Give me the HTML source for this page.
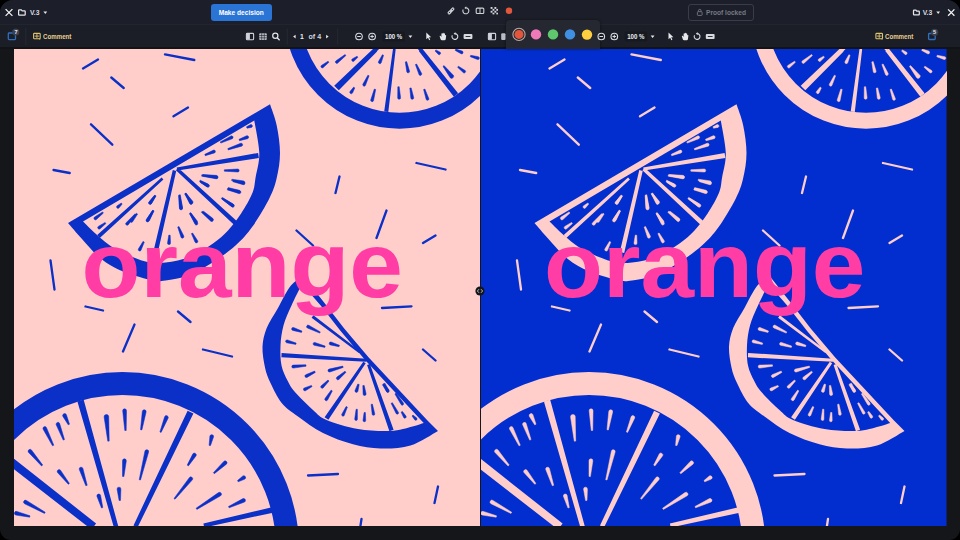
<!DOCTYPE html>
<html><head><meta charset="utf-8"><title>Proof compare</title>
<style>
html,body{margin:0;padding:0;background:#000;}
body{width:960px;height:540px;overflow:hidden;font-family:"Liberation Sans",sans-serif;}
#app{position:relative;width:960px;height:540px;background:#14161a;border-radius:13px 13px 11px 11px;overflow:hidden;}
#top{position:absolute;left:0;top:0;width:960px;height:24px;background:#1c1f29;}
#bar{position:absolute;left:0;top:24px;width:960px;height:24px;background:#1b1e27;border-top:1px solid #22252f;box-sizing:border-box;}
#chrome{position:absolute;left:0;top:0;}
#chrome text{font-family:"Liberation Sans",sans-serif;font-weight:bold;font-size:6.8px;}
.btn{position:absolute;box-sizing:border-box;border-radius:3px;font-weight:bold;font-size:6.6px;line-height:18.3px;overflow:hidden;white-space:nowrap;}
</style></head><body>
<div id="app">
<div id="top"></div>
<div id="bar"></div>
<svg style="position:absolute;left:13.5px;top:48.5px" width="466" height="477" viewBox="13.5 48.5 466 477">
<rect x="13.5" y="48" width="466" height="478" fill="#ffcecb"/>
<g transform="translate(0,0)">
<path d="M82.5 68.0L97.5 59.0M164.5 53.8L193.8 59.5M110.8 77.0L123.2 87.5M173.0 115.8L187.5 107.0M90.5 123.8L111.8 144.2M53.0 169.5L69.2 172.5M416.0 162.5L445.0 169.0M339.0 176.0L335.0 192.5M386.0 210.0L376.0 237.5M296.0 230.0L312.5 245.0M435.0 235.0L422.5 242.5M50.0 260.0L54.0 289.0M381.5 307.5L411.0 305.8M85.0 306.0L102.5 310.0M134.0 324.0L122.5 351.0M177.5 311.0L190.0 321.5M202.5 349.0L231.5 356.0M422.5 349.0L435.0 360.0M307.5 475.0L337.5 473.5M437.5 486.0L434.0 502.5M361.0 518.5L360.0 525.0" stroke="#0b30c8" stroke-width="2.3" stroke-linecap="round" fill="none"/>
<circle cx="399" cy="13" r="107.2" fill="none" stroke="#0b30c8" stroke-width="16"/>
<path d="M373.4 47.6L333.7 85.2L338.3 89.8L376.6 50.9ZM392.4 49.1L383.7 111.0L387.8 111.5L395.1 49.4ZM418.3 50.5L453.4 96.2L457.6 92.8L421.7 48.0ZM395.4 26.9L373.6 47.8L376.4 50.7L397.6 29.1ZM395.5 27.9L392.5 49.1L395.0 49.4L397.5 28.1ZM399.3 28.7L418.9 50.3L421.1 48.2L400.7 27.3Z" fill="#0b30c8"/>
<path d="M322.5 67.3L328.4 61.8L327.6 60.7L320.8 65.0A1.45 1.45 0 0 0 322.5 67.3ZM337.0 62.7L345.4 55.0L344.6 54.0L335.2 60.5A1.45 1.45 0 0 0 337.0 62.7ZM353.3 60.8L357.4 56.8L356.6 55.7L351.6 58.5A1.45 1.45 0 0 0 353.3 60.8ZM380.7 62.3L383.1 54.8L381.9 54.2L378.0 61.1A1.45 1.45 0 0 0 380.7 62.3ZM364.9 85.0L368.6 75.3L367.4 74.7L362.3 83.8A1.45 1.45 0 0 0 364.9 85.0ZM352.0 92.5L354.3 87.4L353.2 86.6L349.5 91.0A1.45 1.45 0 0 0 352.0 92.5ZM373.0 100.2L375.2 88.9L373.8 88.6L370.2 99.5A1.45 1.45 0 0 0 373.0 100.2ZM409.1 70.8L406.2 61.1L404.8 61.4L406.3 71.4A1.45 1.45 0 0 0 409.1 70.8ZM421.2 73.1L416.1 63.5L414.9 64.0L418.6 74.3A1.45 1.45 0 0 0 421.2 73.1ZM400.1 97.2L398.7 86.2L397.3 86.3L397.2 97.4A1.45 1.45 0 0 0 400.1 97.2ZM413.2 97.1L410.7 87.4L409.3 87.6L410.3 97.6A1.45 1.45 0 0 0 413.2 97.1ZM428.4 98.2L424.4 88.5L423.1 89.0L425.7 99.1A1.45 1.45 0 0 0 428.4 98.2ZM464.7 70.0L457.9 65.7L457.1 66.8L463.0 72.3A1.45 1.45 0 0 0 464.7 70.0ZM439.7 51.7L435.4 49.4L434.6 50.6L438.0 54.0A1.45 1.45 0 0 0 439.7 51.7ZM461.7 50.6L455.3 48.6L454.7 49.9L460.6 53.3A1.45 1.45 0 0 0 461.7 50.6ZM477.8 56.2L470.2 54.8L469.8 56.2L477.0 59.0A1.45 1.45 0 0 0 477.8 56.2Z" fill="#0b30c8" stroke="#0b30c8" stroke-width="0.5" stroke-linejoin="round"/>
<path d="M452.8 74.7L443.5 65.1L442.5 65.9L449.7 77.2A2.00 2.00 0 0 0 452.8 74.7Z" fill="#0b30c8" stroke="#0b30c8" stroke-width="0.5" stroke-linejoin="round"/>
<circle cx="122" cy="548" r="165" fill="none" stroke="#0b30c8" stroke-width="23"/>
<path d="M76.9 400.9L113.3 526.6L117.7 525.4L83.1 399.1ZM187.1 410.3L133.0 525.0L137.0 527.0L192.9 413.1ZM7.4 464.1L91.0 529.0L95.6 523.0L12.6 457.5ZM271.4 506.8L202.9 523.0L203.7 527.0L272.6 512.2Z" fill="#0b30c8"/>
<path d="M62.4 415.9L67.7 424.3L69.0 423.7L65.9 414.2A1.90 1.90 0 0 0 62.4 415.9ZM42.5 428.5L52.0 445.3L53.3 444.7L45.9 426.9A1.90 1.90 0 0 0 42.5 428.5ZM55.6 424.1L62.7 439.6L64.0 439.1L59.1 422.8A1.90 1.90 0 0 0 55.6 424.1ZM28.1 452.0L41.1 465.5L42.2 464.5L31.0 449.5A1.90 1.90 0 0 0 28.1 452.0ZM78.8 469.1L85.3 485.2L86.7 484.8L82.4 467.9A1.90 1.90 0 0 0 78.8 469.1ZM57.0 472.0L67.8 483.8L68.9 482.9L60.0 469.7A1.90 1.90 0 0 0 57.0 472.0ZM96.4 495.7L101.0 507.5L102.3 507.1L100.0 494.6A1.90 1.90 0 0 0 96.4 495.7ZM116.6 488.7L118.6 500.1L120.0 499.9L120.4 488.4A1.90 1.90 0 0 0 116.6 488.7ZM122.2 410.3L124.3 430.0L125.7 430.0L126.0 410.1A1.90 1.90 0 0 0 122.2 410.3ZM141.8 410.9L140.0 429.2L141.4 429.4L145.6 411.5A1.90 1.90 0 0 0 141.8 410.9ZM164.2 416.1L159.4 431.4L160.6 431.9L167.7 417.5A1.90 1.90 0 0 0 164.2 416.1ZM144.4 450.7L138.7 479.2L140.0 479.5L148.1 451.6A1.90 1.90 0 0 0 144.4 450.7ZM122.0 460.1L122.0 475.9L123.4 476.1L125.8 460.4A1.90 1.90 0 0 0 122.0 460.1ZM209.4 435.5L208.6 444.9L210.0 445.1L213.1 436.3A1.90 1.90 0 0 0 209.4 435.5ZM192.4 453.3L186.7 464.6L187.9 465.4L195.6 455.3A1.90 1.90 0 0 0 192.4 453.3ZM223.3 460.9L212.9 472.2L213.8 473.2L225.9 463.7A1.90 1.90 0 0 0 223.3 460.9ZM189.0 476.9L173.5 497.9L174.5 498.8L191.9 479.3A1.90 1.90 0 0 0 189.0 476.9ZM242.4 475.4L237.0 480.1L237.7 481.3L244.4 478.6A1.90 1.90 0 0 0 242.4 475.4ZM218.0 492.1L195.6 507.7L196.4 508.9L220.1 495.3A1.90 1.90 0 0 0 218.0 492.1ZM242.5 498.1L228.0 506.0L228.6 507.3L244.1 501.5A1.90 1.90 0 0 0 242.5 498.1ZM24.1 503.3L44.0 512.9L44.7 511.7L25.9 499.9A1.90 1.90 0 0 0 24.1 503.3ZM15.4 514.6L29.2 516.7L29.5 515.3L16.3 510.9A1.90 1.90 0 0 0 15.4 514.6Z" fill="#0b30c8" stroke="#0b30c8" stroke-width="0.5" stroke-linejoin="round"/>
<path d="M103.6 416.5L107.3 440.7L108.7 440.6L108.2 416.1A2.30 2.30 0 0 0 103.6 416.5Z" fill="#0b30c8" stroke="#0b30c8" stroke-width="0.5" stroke-linejoin="round"/>
<path d="M269.5 103.8C270.6 107.3 274.6 116.9 276.2 125.0C277.9 133.1 279.5 143.8 279.5 152.5C279.5 161.2 278.0 169.9 276.2 177.5C274.5 185.1 272.8 189.9 268.8 198.0C264.7 206.1 257.6 218.2 252.0 226.0C246.4 233.8 241.7 239.0 235.0 245.0C228.3 251.0 219.9 257.0 212.0 262.0C204.1 267.0 195.3 272.0 187.5 275.0C179.7 278.0 171.2 279.2 165.0 280.0C158.8 280.8 157.7 281.2 150.0 279.5C142.3 277.8 127.6 273.3 119.0 269.5C110.4 265.7 104.8 261.7 98.5 256.5C92.2 251.3 86.7 244.2 81.5 238.5C76.3 232.8 69.8 225.2 67.5 222.5Z" fill="#0b30c8"/>
<path d="M253.8 120.0C254.6 125.4 258.5 142.9 258.8 152.5C259.0 162.1 256.1 170.8 255.0 177.5C253.9 184.2 254.3 186.6 251.9 192.5C249.5 198.4 244.7 206.8 240.6 213.0C236.5 219.2 232.2 225.0 227.5 230.0C222.8 235.0 218.8 238.7 212.5 243.0C206.2 247.3 197.9 252.8 190.0 256.0C182.1 259.2 172.5 261.2 165.0 262.0C157.5 262.8 152.9 263.0 145.0 261.0C137.1 259.0 125.0 253.9 117.5 250.0C110.0 246.1 105.8 242.3 100.0 237.5C94.2 232.7 85.4 223.8 82.5 221.0Z" fill="#ffcecb"/>
<path d="M176.8 170.1L258.4 157.5L257.6 152.5L176.2 166.9ZM175.4 169.7L233.5 224.2L236.5 220.8L177.6 167.3ZM172.3 169.6L152.8 251.5L157.2 252.5L175.7 170.4ZM161.1 177.0L96.7 234.6L99.3 237.4L162.9 179.0Z" fill="#0b30c8"/>
<path d="M250.1 124.1L246.0 126.3L246.5 127.7L251.1 126.9A1.50 1.50 0 0 0 250.1 124.1ZM246.1 135.3L238.5 138.8L239.0 140.2L247.1 138.2A1.50 1.50 0 0 0 246.1 135.3ZM240.1 142.8L227.3 148.1L227.7 149.4L241.1 145.7A1.50 1.50 0 0 0 240.1 142.8ZM230.5 135.5L219.7 141.4L220.3 142.6L231.8 138.2A1.50 1.50 0 0 0 230.5 135.5ZM213.1 149.6L204.3 153.8L204.7 155.2L214.1 152.4A1.50 1.50 0 0 0 213.1 149.6ZM237.2 168.5L223.8 169.3L223.8 170.7L237.2 171.5A1.50 1.50 0 0 0 237.2 168.5ZM216.2 175.3L201.3 174.3L201.2 175.7L215.8 178.3A1.50 1.50 0 0 0 216.2 175.3ZM243.3 181.2L232.6 179.8L232.4 181.2L242.7 184.2A1.50 1.50 0 0 0 243.3 181.2ZM207.4 183.5L200.3 180.6L199.7 181.9L206.0 186.1A1.50 1.50 0 0 0 207.4 183.5ZM239.4 190.2L227.2 188.1L226.8 189.4L238.7 193.1A1.50 1.50 0 0 0 239.4 190.2ZM233.4 204.2L221.7 196.9L220.8 198.1L231.7 206.6A1.50 1.50 0 0 0 233.4 204.2ZM182.0 207.0L179.4 194.9L178.1 195.1L179.0 207.5A1.50 1.50 0 0 0 182.0 207.0ZM191.8 201.7L185.6 192.6L184.4 193.4L189.2 203.2A1.50 1.50 0 0 0 191.8 201.7ZM196.7 220.4L190.1 212.1L188.9 212.9L194.2 222.1A1.50 1.50 0 0 0 196.7 220.4ZM212.4 217.9L203.0 210.7L202.0 211.8L210.4 220.1A1.50 1.50 0 0 0 212.4 217.9ZM150.8 203.4L155.6 195.4L154.4 194.6L148.4 201.7A1.50 1.50 0 0 0 150.8 203.4ZM148.3 220.7L153.6 210.4L152.4 209.6L145.7 219.2A1.50 1.50 0 0 0 148.3 220.7ZM127.6 224.4L135.5 214.2L134.5 213.3L125.4 222.4A1.50 1.50 0 0 0 127.6 224.4ZM118.4 207.6L121.7 203.5L120.8 202.5L116.4 205.4A1.50 1.50 0 0 0 118.4 207.6ZM95.9 219.0L102.9 212.6L102.1 211.4L94.0 216.6A1.50 1.50 0 0 0 95.9 219.0ZM99.6 228.3L105.4 223.1L104.6 221.9L97.8 225.9A1.50 1.50 0 0 0 99.6 228.3Z" fill="#0b30c8" stroke="#0b30c8" stroke-width="0.5" stroke-linejoin="round"/>
<path d="M182.0 207.7L179.8 194.3L178.4 194.4L179.0 208.0A1.50 1.50 0 0 0 182.0 207.7ZM192.2 200.7L185.3 192.5L184.2 193.3L189.8 202.5A1.50 1.50 0 0 0 192.2 200.7ZM197.1 222.3L190.6 212.8L189.4 213.5L194.5 223.8A1.50 1.50 0 0 0 197.1 222.3ZM212.3 218.5L201.7 210.7L200.8 211.8L210.4 220.8A1.50 1.50 0 0 0 212.3 218.5ZM183.3 235.5L178.5 226.0L177.2 226.5L180.5 236.7A1.50 1.50 0 0 0 183.3 235.5ZM197.2 240.2L192.1 232.5L190.9 233.1L194.5 241.6A1.50 1.50 0 0 0 197.2 240.2ZM170.0 242.7L169.7 234.7L168.3 234.6L167.0 242.5A1.50 1.50 0 0 0 170.0 242.7ZM148.9 220.0L153.1 210.6L151.9 210.0L146.3 218.6A1.50 1.50 0 0 0 148.9 220.0ZM150.8 203.3L155.0 195.7L153.8 194.9L148.3 201.7A1.50 1.50 0 0 0 150.8 203.3ZM140.4 250.0L143.8 241.6L142.5 240.9L137.8 248.6A1.50 1.50 0 0 0 140.4 250.0ZM132.1 221.3L137.1 213.6L136.0 212.7L129.7 219.5A1.50 1.50 0 0 0 132.1 221.3ZM215.9 174.9L202.3 174.0L202.1 175.4L215.5 177.9A1.50 1.50 0 0 0 215.9 174.9ZM208.2 183.9L199.7 179.7L199.0 180.9L206.7 186.5A1.50 1.50 0 0 0 208.2 183.9ZM243.2 180.4L231.4 178.7L231.1 180.1L242.6 183.3A1.50 1.50 0 0 0 243.2 180.4ZM238.7 189.7L227.7 187.1L227.3 188.5L237.8 192.6A1.50 1.50 0 0 0 238.7 189.7ZM232.7 203.5L222.3 197.5L221.5 198.7L231.0 206.0A1.50 1.50 0 0 0 232.7 203.5Z" fill="#0b30c8" stroke="#0b30c8" stroke-width="0.5" stroke-linejoin="round"/>
<path d="M303.0 276.0C300.8 277.6 294.2 280.2 290.0 285.5C285.8 290.8 281.5 300.5 277.5 307.5C273.5 314.5 268.8 321.1 266.2 327.5C263.7 333.9 262.3 339.4 262.0 346.0C261.7 352.6 263.2 360.9 264.5 367.0C265.8 373.1 267.2 376.6 270.0 382.5C272.8 388.4 276.7 396.9 281.2 402.5C285.8 408.1 290.6 411.0 297.5 416.0C304.4 421.0 313.3 427.9 322.5 432.5C331.7 437.1 342.9 441.2 352.5 443.8C362.1 446.3 370.4 447.8 380.0 448.0C389.6 448.2 400.4 447.9 410.0 445.0C419.6 442.1 432.9 432.9 437.5 430.5L426.5 419.5L368.0 356.7L343.5 327.8L324.0 302.6Z" fill="#0b30c8"/>
<path d="M301.5 283.5C299.8 287.1 294.1 298.1 291.0 305.0C287.9 311.9 284.8 318.3 283.0 325.0C281.2 331.7 280.3 338.3 280.0 345.0C279.7 351.7 279.8 359.2 281.0 365.0C282.2 370.8 284.8 375.7 287.0 380.0C289.2 384.3 289.8 386.1 294.0 391.0C298.2 395.9 307.2 404.8 312.5 409.5C317.8 414.2 318.5 416.3 326.0 419.5C333.5 422.7 346.8 426.7 357.5 428.5C368.2 430.3 380.9 430.9 390.0 430.5C399.1 430.1 406.5 427.3 412.0 426.0C417.5 424.7 421.3 423.2 423.2 422.6L364.6 359.5L340.1 330.6L320.6 305.4Z" fill="#ffcecb"/>
<path d="M366.1 358.3L281.1 352.4L280.9 356.8L365.9 361.3ZM362.8 361.2L324.1 416.7L327.9 419.3L365.2 362.8ZM366.6 364.5L388.9 430.7L393.1 429.3L369.4 363.5ZM359.7 350.8L312.9 314.8L311.1 317.2L358.3 352.6Z" fill="#0b30c8"/>
<path d="M292.2 329.9L301.0 331.9L301.5 330.6L293.1 327.0A1.50 1.50 0 0 0 292.2 329.9ZM306.9 327.5L319.2 332.6L319.8 331.4L308.3 324.8A1.50 1.50 0 0 0 306.9 327.5ZM286.1 342.3L295.3 343.9L295.7 342.6L286.8 339.4A1.50 1.50 0 0 0 286.1 342.3ZM313.6 344.8L324.3 346.9L324.7 345.6L314.3 341.9A1.50 1.50 0 0 0 313.6 344.8ZM329.8 344.4L338.5 346.2L339.0 344.8L330.6 341.5A1.50 1.50 0 0 0 329.8 344.4ZM292.9 367.6L305.6 365.7L305.4 364.3L292.6 364.6A1.50 1.50 0 0 0 292.9 367.6ZM306.5 376.9L314.8 371.9L314.2 370.6L305.2 374.2A1.50 1.50 0 0 0 306.5 376.9ZM329.4 371.5L342.7 366.9L342.3 365.6L328.5 368.6A1.50 1.50 0 0 0 329.4 371.5ZM305.0 390.2L311.6 386.1L310.9 384.9L303.7 387.5A1.50 1.50 0 0 0 305.0 390.2ZM322.6 387.5L328.5 380.5L327.5 379.5L320.5 385.4A1.50 1.50 0 0 0 322.6 387.5ZM338.4 378.9L345.5 371.8L344.5 370.7L336.4 376.6A1.50 1.50 0 0 0 338.4 378.9ZM327.1 399.5L331.8 390.4L330.7 389.6L324.5 397.9A1.50 1.50 0 0 0 327.1 399.5ZM357.4 390.8L358.7 384.0L357.3 383.5L354.5 389.9A1.50 1.50 0 0 0 357.4 390.8ZM365.6 393.3L363.7 384.9L362.3 385.1L362.6 393.7A1.50 1.50 0 0 0 365.6 393.3ZM388.3 389.2L383.1 383.3L381.9 384.2L385.9 390.9A1.50 1.50 0 0 0 388.3 389.2Z" fill="#0b30c8" stroke="#0b30c8" stroke-width="0.5" stroke-linejoin="round"/>
<path d="M343.8 414.8L346.9 406.5L345.6 406.0L341.3 413.7A1.35 1.35 0 0 0 343.8 414.8ZM356.9 418.7L356.9 408.8L355.6 408.7L354.2 418.6A1.35 1.35 0 0 0 356.9 418.7ZM365.2 420.0L364.9 412.0L363.6 412.0L362.5 419.8A1.35 1.35 0 0 0 365.2 420.0ZM374.3 413.4L371.9 403.6L370.6 403.9L371.7 413.9A1.35 1.35 0 0 0 374.3 413.4ZM398.0 411.9L391.9 402.2L390.6 402.8L395.7 413.2A1.35 1.35 0 0 0 398.0 411.9ZM405.5 415.6L401.9 410.9L400.6 411.6L403.1 417.0A1.35 1.35 0 0 0 405.5 415.6ZM416.3 417.6L412.5 414.5L411.5 415.5L414.3 419.4A1.35 1.35 0 0 0 416.3 417.6ZM388.6 390.2L384.4 382.7L383.1 383.3L386.2 391.4A1.35 1.35 0 0 0 388.6 390.2ZM402.9 402.6L395.6 392.6L394.4 393.4L400.6 404.1A1.35 1.35 0 0 0 402.9 402.6Z" fill="#0b30c8" stroke="#0b30c8" stroke-width="0.5" stroke-linejoin="round"/>
</g>
<text x="81" y="296" font-family="Liberation Sans, sans-serif" font-weight="bold" font-size="93.5" textLength="321.5" lengthAdjust="spacingAndGlyphs" fill="#ff3da4">orange</text>
</svg>
<svg style="position:absolute;left:481px;top:48.5px" width="465.5" height="477" viewBox="481 48.5 465.5 477">
<rect x="481" y="48" width="465.5" height="478" fill="#032ecf"/>
<g transform="translate(467,0)">
<path d="M82.5 68.0L97.5 59.0M164.5 53.8L193.8 59.5M110.8 77.0L123.2 87.5M173.0 115.8L187.5 107.0M90.5 123.8L111.8 144.2M53.0 169.5L69.2 172.5M416.0 162.5L445.0 169.0M339.0 176.0L335.0 192.5M386.0 210.0L376.0 237.5M296.0 230.0L312.5 245.0M435.0 235.0L422.5 242.5M50.0 260.0L54.0 289.0M381.5 307.5L411.0 305.8M85.0 306.0L102.5 310.0M134.0 324.0L122.5 351.0M177.5 311.0L190.0 321.5M202.5 349.0L231.5 356.0M422.5 349.0L435.0 360.0M307.5 475.0L337.5 473.5M437.5 486.0L434.0 502.5M361.0 518.5L360.0 525.0" stroke="#ffcecb" stroke-width="2.3" stroke-linecap="round" fill="none"/>
<circle cx="399" cy="13" r="107.2" fill="none" stroke="#ffcecb" stroke-width="16"/>
<path d="M373.4 47.6L333.7 85.2L338.3 89.8L376.6 50.9ZM392.4 49.1L383.7 111.0L387.8 111.5L395.1 49.4ZM418.3 50.5L453.4 96.2L457.6 92.8L421.7 48.0ZM395.4 26.9L373.6 47.8L376.4 50.7L397.6 29.1ZM395.5 27.9L392.5 49.1L395.0 49.4L397.5 28.1ZM399.3 28.7L418.9 50.3L421.1 48.2L400.7 27.3Z" fill="#ffcecb"/>
<path d="M322.5 67.3L328.4 61.8L327.6 60.7L320.8 65.0A1.45 1.45 0 0 0 322.5 67.3ZM337.0 62.7L345.4 55.0L344.6 54.0L335.2 60.5A1.45 1.45 0 0 0 337.0 62.7ZM353.3 60.8L357.4 56.8L356.6 55.7L351.6 58.5A1.45 1.45 0 0 0 353.3 60.8ZM380.7 62.3L383.1 54.8L381.9 54.2L378.0 61.1A1.45 1.45 0 0 0 380.7 62.3ZM364.9 85.0L368.6 75.3L367.4 74.7L362.3 83.8A1.45 1.45 0 0 0 364.9 85.0ZM352.0 92.5L354.3 87.4L353.2 86.6L349.5 91.0A1.45 1.45 0 0 0 352.0 92.5ZM373.0 100.2L375.2 88.9L373.8 88.6L370.2 99.5A1.45 1.45 0 0 0 373.0 100.2ZM409.1 70.8L406.2 61.1L404.8 61.4L406.3 71.4A1.45 1.45 0 0 0 409.1 70.8ZM421.2 73.1L416.1 63.5L414.9 64.0L418.6 74.3A1.45 1.45 0 0 0 421.2 73.1ZM400.1 97.2L398.7 86.2L397.3 86.3L397.2 97.4A1.45 1.45 0 0 0 400.1 97.2ZM413.2 97.1L410.7 87.4L409.3 87.6L410.3 97.6A1.45 1.45 0 0 0 413.2 97.1ZM428.4 98.2L424.4 88.5L423.1 89.0L425.7 99.1A1.45 1.45 0 0 0 428.4 98.2ZM464.7 70.0L457.9 65.7L457.1 66.8L463.0 72.3A1.45 1.45 0 0 0 464.7 70.0ZM439.7 51.7L435.4 49.4L434.6 50.6L438.0 54.0A1.45 1.45 0 0 0 439.7 51.7ZM461.7 50.6L455.3 48.6L454.7 49.9L460.6 53.3A1.45 1.45 0 0 0 461.7 50.6ZM477.8 56.2L470.2 54.8L469.8 56.2L477.0 59.0A1.45 1.45 0 0 0 477.8 56.2Z" fill="#ffcecb" stroke="#ffcecb" stroke-width="0.5" stroke-linejoin="round"/>
<path d="M452.8 74.7L443.5 65.1L442.5 65.9L449.7 77.2A2.00 2.00 0 0 0 452.8 74.7Z" fill="#ffcecb" stroke="#ffcecb" stroke-width="0.5" stroke-linejoin="round"/>
<circle cx="122" cy="548" r="165" fill="none" stroke="#ffcecb" stroke-width="23"/>
<path d="M76.9 400.9L113.3 526.6L117.7 525.4L83.1 399.1ZM187.1 410.3L133.0 525.0L137.0 527.0L192.9 413.1ZM7.4 464.1L91.0 529.0L95.6 523.0L12.6 457.5ZM271.4 506.8L202.9 523.0L203.7 527.0L272.6 512.2Z" fill="#ffcecb"/>
<path d="M62.4 415.9L67.7 424.3L69.0 423.7L65.9 414.2A1.90 1.90 0 0 0 62.4 415.9ZM42.5 428.5L52.0 445.3L53.3 444.7L45.9 426.9A1.90 1.90 0 0 0 42.5 428.5ZM55.6 424.1L62.7 439.6L64.0 439.1L59.1 422.8A1.90 1.90 0 0 0 55.6 424.1ZM28.1 452.0L41.1 465.5L42.2 464.5L31.0 449.5A1.90 1.90 0 0 0 28.1 452.0ZM78.8 469.1L85.3 485.2L86.7 484.8L82.4 467.9A1.90 1.90 0 0 0 78.8 469.1ZM57.0 472.0L67.8 483.8L68.9 482.9L60.0 469.7A1.90 1.90 0 0 0 57.0 472.0ZM96.4 495.7L101.0 507.5L102.3 507.1L100.0 494.6A1.90 1.90 0 0 0 96.4 495.7ZM116.6 488.7L118.6 500.1L120.0 499.9L120.4 488.4A1.90 1.90 0 0 0 116.6 488.7ZM122.2 410.3L124.3 430.0L125.7 430.0L126.0 410.1A1.90 1.90 0 0 0 122.2 410.3ZM141.8 410.9L140.0 429.2L141.4 429.4L145.6 411.5A1.90 1.90 0 0 0 141.8 410.9ZM164.2 416.1L159.4 431.4L160.6 431.9L167.7 417.5A1.90 1.90 0 0 0 164.2 416.1ZM144.4 450.7L138.7 479.2L140.0 479.5L148.1 451.6A1.90 1.90 0 0 0 144.4 450.7ZM122.0 460.1L122.0 475.9L123.4 476.1L125.8 460.4A1.90 1.90 0 0 0 122.0 460.1ZM209.4 435.5L208.6 444.9L210.0 445.1L213.1 436.3A1.90 1.90 0 0 0 209.4 435.5ZM192.4 453.3L186.7 464.6L187.9 465.4L195.6 455.3A1.90 1.90 0 0 0 192.4 453.3ZM223.3 460.9L212.9 472.2L213.8 473.2L225.9 463.7A1.90 1.90 0 0 0 223.3 460.9ZM189.0 476.9L173.5 497.9L174.5 498.8L191.9 479.3A1.90 1.90 0 0 0 189.0 476.9ZM242.4 475.4L237.0 480.1L237.7 481.3L244.4 478.6A1.90 1.90 0 0 0 242.4 475.4ZM218.0 492.1L195.6 507.7L196.4 508.9L220.1 495.3A1.90 1.90 0 0 0 218.0 492.1ZM242.5 498.1L228.0 506.0L228.6 507.3L244.1 501.5A1.90 1.90 0 0 0 242.5 498.1ZM24.1 503.3L44.0 512.9L44.7 511.7L25.9 499.9A1.90 1.90 0 0 0 24.1 503.3ZM15.4 514.6L29.2 516.7L29.5 515.3L16.3 510.9A1.90 1.90 0 0 0 15.4 514.6Z" fill="#ffcecb" stroke="#ffcecb" stroke-width="0.5" stroke-linejoin="round"/>
<path d="M103.6 416.5L107.3 440.7L108.7 440.6L108.2 416.1A2.30 2.30 0 0 0 103.6 416.5Z" fill="#ffcecb" stroke="#ffcecb" stroke-width="0.5" stroke-linejoin="round"/>
<path d="M269.5 103.8C270.6 107.3 274.6 116.9 276.2 125.0C277.9 133.1 279.5 143.8 279.5 152.5C279.5 161.2 278.0 169.9 276.2 177.5C274.5 185.1 272.8 189.9 268.8 198.0C264.7 206.1 257.6 218.2 252.0 226.0C246.4 233.8 241.7 239.0 235.0 245.0C228.3 251.0 219.9 257.0 212.0 262.0C204.1 267.0 195.3 272.0 187.5 275.0C179.7 278.0 171.2 279.2 165.0 280.0C158.8 280.8 157.7 281.2 150.0 279.5C142.3 277.8 127.6 273.3 119.0 269.5C110.4 265.7 104.8 261.7 98.5 256.5C92.2 251.3 86.7 244.2 81.5 238.5C76.3 232.8 69.8 225.2 67.5 222.5Z" fill="#ffcecb"/>
<path d="M253.8 120.0C254.6 125.4 258.5 142.9 258.8 152.5C259.0 162.1 256.1 170.8 255.0 177.5C253.9 184.2 254.3 186.6 251.9 192.5C249.5 198.4 244.7 206.8 240.6 213.0C236.5 219.2 232.2 225.0 227.5 230.0C222.8 235.0 218.8 238.7 212.5 243.0C206.2 247.3 197.9 252.8 190.0 256.0C182.1 259.2 172.5 261.2 165.0 262.0C157.5 262.8 152.9 263.0 145.0 261.0C137.1 259.0 125.0 253.9 117.5 250.0C110.0 246.1 105.8 242.3 100.0 237.5C94.2 232.7 85.4 223.8 82.5 221.0Z" fill="#032ecf"/>
<path d="M176.8 170.1L258.4 157.5L257.6 152.5L176.2 166.9ZM175.4 169.7L233.5 224.2L236.5 220.8L177.6 167.3ZM172.3 169.6L152.8 251.5L157.2 252.5L175.7 170.4ZM161.1 177.0L96.7 234.6L99.3 237.4L162.9 179.0Z" fill="#ffcecb"/>
<path d="M250.1 124.1L246.0 126.3L246.5 127.7L251.1 126.9A1.50 1.50 0 0 0 250.1 124.1ZM246.1 135.3L238.5 138.8L239.0 140.2L247.1 138.2A1.50 1.50 0 0 0 246.1 135.3ZM240.1 142.8L227.3 148.1L227.7 149.4L241.1 145.7A1.50 1.50 0 0 0 240.1 142.8ZM230.5 135.5L219.7 141.4L220.3 142.6L231.8 138.2A1.50 1.50 0 0 0 230.5 135.5ZM213.1 149.6L204.3 153.8L204.7 155.2L214.1 152.4A1.50 1.50 0 0 0 213.1 149.6ZM237.2 168.5L223.8 169.3L223.8 170.7L237.2 171.5A1.50 1.50 0 0 0 237.2 168.5ZM216.2 175.3L201.3 174.3L201.2 175.7L215.8 178.3A1.50 1.50 0 0 0 216.2 175.3ZM243.3 181.2L232.6 179.8L232.4 181.2L242.7 184.2A1.50 1.50 0 0 0 243.3 181.2ZM207.4 183.5L200.3 180.6L199.7 181.9L206.0 186.1A1.50 1.50 0 0 0 207.4 183.5ZM239.4 190.2L227.2 188.1L226.8 189.4L238.7 193.1A1.50 1.50 0 0 0 239.4 190.2ZM233.4 204.2L221.7 196.9L220.8 198.1L231.7 206.6A1.50 1.50 0 0 0 233.4 204.2ZM182.0 207.0L179.4 194.9L178.1 195.1L179.0 207.5A1.50 1.50 0 0 0 182.0 207.0ZM191.8 201.7L185.6 192.6L184.4 193.4L189.2 203.2A1.50 1.50 0 0 0 191.8 201.7ZM196.7 220.4L190.1 212.1L188.9 212.9L194.2 222.1A1.50 1.50 0 0 0 196.7 220.4ZM212.4 217.9L203.0 210.7L202.0 211.8L210.4 220.1A1.50 1.50 0 0 0 212.4 217.9ZM150.8 203.4L155.6 195.4L154.4 194.6L148.4 201.7A1.50 1.50 0 0 0 150.8 203.4ZM148.3 220.7L153.6 210.4L152.4 209.6L145.7 219.2A1.50 1.50 0 0 0 148.3 220.7ZM127.6 224.4L135.5 214.2L134.5 213.3L125.4 222.4A1.50 1.50 0 0 0 127.6 224.4ZM118.4 207.6L121.7 203.5L120.8 202.5L116.4 205.4A1.50 1.50 0 0 0 118.4 207.6ZM95.9 219.0L102.9 212.6L102.1 211.4L94.0 216.6A1.50 1.50 0 0 0 95.9 219.0ZM99.6 228.3L105.4 223.1L104.6 221.9L97.8 225.9A1.50 1.50 0 0 0 99.6 228.3Z" fill="#ffcecb" stroke="#ffcecb" stroke-width="0.5" stroke-linejoin="round"/>
<path d="M182.0 207.7L179.8 194.3L178.4 194.4L179.0 208.0A1.50 1.50 0 0 0 182.0 207.7ZM192.2 200.7L185.3 192.5L184.2 193.3L189.8 202.5A1.50 1.50 0 0 0 192.2 200.7ZM197.1 222.3L190.6 212.8L189.4 213.5L194.5 223.8A1.50 1.50 0 0 0 197.1 222.3ZM212.3 218.5L201.7 210.7L200.8 211.8L210.4 220.8A1.50 1.50 0 0 0 212.3 218.5ZM183.3 235.5L178.5 226.0L177.2 226.5L180.5 236.7A1.50 1.50 0 0 0 183.3 235.5ZM197.2 240.2L192.1 232.5L190.9 233.1L194.5 241.6A1.50 1.50 0 0 0 197.2 240.2ZM170.0 242.7L169.7 234.7L168.3 234.6L167.0 242.5A1.50 1.50 0 0 0 170.0 242.7ZM148.9 220.0L153.1 210.6L151.9 210.0L146.3 218.6A1.50 1.50 0 0 0 148.9 220.0ZM150.8 203.3L155.0 195.7L153.8 194.9L148.3 201.7A1.50 1.50 0 0 0 150.8 203.3ZM140.4 250.0L143.8 241.6L142.5 240.9L137.8 248.6A1.50 1.50 0 0 0 140.4 250.0ZM132.1 221.3L137.1 213.6L136.0 212.7L129.7 219.5A1.50 1.50 0 0 0 132.1 221.3ZM215.9 174.9L202.3 174.0L202.1 175.4L215.5 177.9A1.50 1.50 0 0 0 215.9 174.9ZM208.2 183.9L199.7 179.7L199.0 180.9L206.7 186.5A1.50 1.50 0 0 0 208.2 183.9ZM243.2 180.4L231.4 178.7L231.1 180.1L242.6 183.3A1.50 1.50 0 0 0 243.2 180.4ZM238.7 189.7L227.7 187.1L227.3 188.5L237.8 192.6A1.50 1.50 0 0 0 238.7 189.7ZM232.7 203.5L222.3 197.5L221.5 198.7L231.0 206.0A1.50 1.50 0 0 0 232.7 203.5Z" fill="#ffcecb" stroke="#ffcecb" stroke-width="0.5" stroke-linejoin="round"/>
<path d="M303.0 276.0C300.8 277.6 294.2 280.2 290.0 285.5C285.8 290.8 281.5 300.5 277.5 307.5C273.5 314.5 268.8 321.1 266.2 327.5C263.7 333.9 262.3 339.4 262.0 346.0C261.7 352.6 263.2 360.9 264.5 367.0C265.8 373.1 267.2 376.6 270.0 382.5C272.8 388.4 276.7 396.9 281.2 402.5C285.8 408.1 290.6 411.0 297.5 416.0C304.4 421.0 313.3 427.9 322.5 432.5C331.7 437.1 342.9 441.2 352.5 443.8C362.1 446.3 370.4 447.8 380.0 448.0C389.6 448.2 400.4 447.9 410.0 445.0C419.6 442.1 432.9 432.9 437.5 430.5L426.5 419.5L368.0 356.7L343.5 327.8L324.0 302.6Z" fill="#ffcecb"/>
<path d="M301.5 283.5C299.8 287.1 294.1 298.1 291.0 305.0C287.9 311.9 284.8 318.3 283.0 325.0C281.2 331.7 280.3 338.3 280.0 345.0C279.7 351.7 279.8 359.2 281.0 365.0C282.2 370.8 284.8 375.7 287.0 380.0C289.2 384.3 289.8 386.1 294.0 391.0C298.2 395.9 307.2 404.8 312.5 409.5C317.8 414.2 318.5 416.3 326.0 419.5C333.5 422.7 346.8 426.7 357.5 428.5C368.2 430.3 380.9 430.9 390.0 430.5C399.1 430.1 406.5 427.3 412.0 426.0C417.5 424.7 421.3 423.2 423.2 422.6L364.6 359.5L340.1 330.6L320.6 305.4Z" fill="#032ecf"/>
<path d="M366.1 358.3L281.1 352.4L280.9 356.8L365.9 361.3ZM362.8 361.2L324.1 416.7L327.9 419.3L365.2 362.8ZM366.6 364.5L388.9 430.7L393.1 429.3L369.4 363.5ZM359.7 350.8L312.9 314.8L311.1 317.2L358.3 352.6Z" fill="#ffcecb"/>
<path d="M292.2 329.9L301.0 331.9L301.5 330.6L293.1 327.0A1.50 1.50 0 0 0 292.2 329.9ZM306.9 327.5L319.2 332.6L319.8 331.4L308.3 324.8A1.50 1.50 0 0 0 306.9 327.5ZM286.1 342.3L295.3 343.9L295.7 342.6L286.8 339.4A1.50 1.50 0 0 0 286.1 342.3ZM313.6 344.8L324.3 346.9L324.7 345.6L314.3 341.9A1.50 1.50 0 0 0 313.6 344.8ZM329.8 344.4L338.5 346.2L339.0 344.8L330.6 341.5A1.50 1.50 0 0 0 329.8 344.4ZM292.9 367.6L305.6 365.7L305.4 364.3L292.6 364.6A1.50 1.50 0 0 0 292.9 367.6ZM306.5 376.9L314.8 371.9L314.2 370.6L305.2 374.2A1.50 1.50 0 0 0 306.5 376.9ZM329.4 371.5L342.7 366.9L342.3 365.6L328.5 368.6A1.50 1.50 0 0 0 329.4 371.5ZM305.0 390.2L311.6 386.1L310.9 384.9L303.7 387.5A1.50 1.50 0 0 0 305.0 390.2ZM322.6 387.5L328.5 380.5L327.5 379.5L320.5 385.4A1.50 1.50 0 0 0 322.6 387.5ZM338.4 378.9L345.5 371.8L344.5 370.7L336.4 376.6A1.50 1.50 0 0 0 338.4 378.9ZM327.1 399.5L331.8 390.4L330.7 389.6L324.5 397.9A1.50 1.50 0 0 0 327.1 399.5ZM357.4 390.8L358.7 384.0L357.3 383.5L354.5 389.9A1.50 1.50 0 0 0 357.4 390.8ZM365.6 393.3L363.7 384.9L362.3 385.1L362.6 393.7A1.50 1.50 0 0 0 365.6 393.3ZM388.3 389.2L383.1 383.3L381.9 384.2L385.9 390.9A1.50 1.50 0 0 0 388.3 389.2Z" fill="#ffcecb" stroke="#ffcecb" stroke-width="0.5" stroke-linejoin="round"/>
<path d="M343.8 414.8L346.9 406.5L345.6 406.0L341.3 413.7A1.35 1.35 0 0 0 343.8 414.8ZM356.9 418.7L356.9 408.8L355.6 408.7L354.2 418.6A1.35 1.35 0 0 0 356.9 418.7ZM365.2 420.0L364.9 412.0L363.6 412.0L362.5 419.8A1.35 1.35 0 0 0 365.2 420.0ZM374.3 413.4L371.9 403.6L370.6 403.9L371.7 413.9A1.35 1.35 0 0 0 374.3 413.4ZM398.0 411.9L391.9 402.2L390.6 402.8L395.7 413.2A1.35 1.35 0 0 0 398.0 411.9ZM405.5 415.6L401.9 410.9L400.6 411.6L403.1 417.0A1.35 1.35 0 0 0 405.5 415.6ZM416.3 417.6L412.5 414.5L411.5 415.5L414.3 419.4A1.35 1.35 0 0 0 416.3 417.6ZM388.6 390.2L384.4 382.7L383.1 383.3L386.2 391.4A1.35 1.35 0 0 0 388.6 390.2ZM402.9 402.6L395.6 392.6L394.4 393.4L400.6 404.1A1.35 1.35 0 0 0 402.9 402.6Z" fill="#ffcecb" stroke="#ffcecb" stroke-width="0.5" stroke-linejoin="round"/>
</g>
<text x="544" y="296" font-family="Liberation Sans, sans-serif" font-weight="bold" font-size="93.5" textLength="321.5" lengthAdjust="spacingAndGlyphs" fill="#ff3da4">orange</text>
</svg>
<div style="position:absolute;left:479.5px;top:48px;width:1.5px;height:478px;background:#14161a"></div>
<div style="position:absolute;left:0;top:47px;width:960px;height:2px;background:#111317"></div>
<svg style="position:absolute;left:473.8px;top:285.4px" width="12" height="12" viewBox="0 0 12 12"><circle cx="6" cy="6" r="4.6" fill="#14161a"/><path d="M5 4.2L3.4 6L5 7.8M7 4.2L8.6 6L7 7.8" stroke="#c9ccd4" stroke-width="0.9" fill="none"/></svg>

<div class="btn" style="left:210.5px;top:4px;width:61.5px;height:16.5px;background:#2a74d6;color:#fff;text-align:center;">Make decision</div>
<div class="btn" style="left:688px;top:4px;width:65.5px;height:16.5px;border:1px solid #393d49;color:#767a87;line-height:16.3px;padding-left:17px;">Proof locked</div>
<div style="position:absolute;left:505.5px;top:20.2px;width:94.5px;height:29px;background:#252831;border-radius:4px 4px 0 0;box-shadow:0 0 3px rgba(0,0,0,.5)"></div>

<svg id="chrome" width="960" height="50" viewBox="0 0 960 50">
<!-- top-left -->
<path d="M5.6 9.1L12.4 15.9M12.4 9.1L5.6 15.9" stroke="#f0f1f4" stroke-width="1.3" fill="none"/>
<path d="M19.2 9.9h2.1l0.9 1h2.4q0.6 0 0.6 0.6v3.1q0 0.6-0.6 0.6h-5.4q-0.6 0-0.6-0.6v-4.1q0-0.6 0.6-0.6z" stroke="#e4e6ea" stroke-width="1.25" fill="none"/>
<text x="29.9" y="15.1" fill="#d9dbe1" style="font-size:7.2px" textLength="9.6" lengthAdjust="spacingAndGlyphs">V.3</text>
<path d="M43.4 11.6h3.8l-1.9 2.3z" fill="#e4e6ea"/>
<!-- top-right -->
<path d="M914.1 10.2h1.8l0.8 0.9h2q0.6 0 0.6 0.6v2.6q0 0.6-0.6 0.6h-4.6q-0.6 0-0.6-0.6v-3.5q0-0.6 0.6-0.6z" stroke="#e4e6ea" stroke-width="1.25" fill="none"/>
<text x="922.7" y="15.1" fill="#d9dbe1" style="font-size:7.2px" textLength="9.6" lengthAdjust="spacingAndGlyphs">V.3</text>
<path d="M936.3 11.6h3.8l-1.9 2.3z" fill="#e4e6ea"/>
<path d="M948.1 9.4L954.4 15.7M954.4 9.4L948.1 15.7" stroke="#f0f1f4" stroke-width="1.3" fill="none"/>
<!-- lock -->
<rect x="697.4" y="11.7" width="4.7" height="3.7" rx="0.7" fill="none" stroke="#767a87" stroke-width="0.9"/>
<path d="M698.5 11.7v-1.1a1.25 1.25 0 0 1 2.5 0v1.1" fill="none" stroke="#767a87" stroke-width="0.9"/>
<!-- top-center icons -->
<g stroke-linecap="round" fill="none"><path d="M449.1 12.8L450.6 11.3M451.4 10.5L452.9 9" stroke="#cfd2d9" stroke-width="3.1"/><path d="M449.1 12.8L450.6 11.3M451.4 10.5L452.9 9" stroke="#1c1f29" stroke-width="1"/><path d="M450.2 11.7L451.8 10.1" stroke="#cfd2d9" stroke-width="1.1"/></g>
<g stroke="#cfd2d9" fill="none" stroke-width="1.1">

<path d="M463.2 9.4a3 3 0 1 0 2.6-1.6"/>
<rect x="476.2" y="8.1" width="7.6" height="5.4" rx="1"/>
</g>
<path d="M466.2 6.2l-1.8 1.7l1.9 1.4z" fill="#cfd2d9"/>
<path d="M480 8.1v5.4" stroke="#cfd2d9" stroke-width="1"/>
<g fill="#cfd2d9"><rect x="490.6" y="7" width="1.9" height="1.9"/><rect x="494.4" y="7" width="1.9" height="1.9"/><rect x="492.5" y="8.9" width="1.9" height="1.9"/><rect x="496.3" y="8.9" width="1.7" height="1.9"/><rect x="490.6" y="10.8" width="1.9" height="1.9"/><rect x="494.4" y="10.8" width="1.9" height="1.9"/><rect x="492.5" y="12.7" width="1.9" height="1.7"/><rect x="496.3" y="12.7" width="1.7" height="1.7"/></g>
<circle cx="509" cy="10.8" r="3.2" fill="#e2573b"/>
<!-- popup colours -->
<circle cx="519" cy="34.4" r="6.1" fill="none" stroke="#bfa9a7" stroke-width="1.1"/>
<circle cx="519" cy="34.4" r="4.5" fill="#e2573b"/>
<circle cx="536" cy="34.4" r="5.2" fill="#ee7ab7"/>
<circle cx="553" cy="34.4" r="5.2" fill="#5fc86e"/>
<circle cx="570" cy="34.4" r="5.2" fill="#3f90e2"/>
<circle cx="587" cy="34.6" r="5.2" fill="#fdd03f"/>
<!-- bar left -->
<rect x="8.3" y="33" width="7.2" height="6.6" rx="0.8" fill="none" stroke="#2f6fc0" stroke-width="1.3"/>
<circle cx="15.8" cy="32" r="3.6" fill="#3a3f4d"/>
<text x="14.4" y="34.2" fill="#e8e9ee" style="font-size:5.6px">7</text>
<path d="M25.8 28v17" stroke="#252832" stroke-width="1"/>
<g id="cmt"><rect x="33.6" y="33.4" width="6.6" height="5.4" rx="0.8" fill="none" stroke="#dcc36e" stroke-width="1.1"/><path d="M36.9 34v4.2M34.6 36.1h4.6" stroke="#dcc36e" stroke-width="0.9"/><path d="M38.6 38.8l1.6 1.3v-1.3z" fill="#dcc36e"/></g>
<text x="43" y="38.9" fill="#e8cf8f" textLength="28.4" lengthAdjust="spacingAndGlyphs">Comment</text>
<!-- bar right -->
<g><rect x="875.9" y="33.4" width="6.6" height="5.4" rx="0.8" fill="none" stroke="#dcc36e" stroke-width="1.1"/><path d="M879.2 34v4.2M876.9 36.1h4.6" stroke="#dcc36e" stroke-width="0.9"/><path d="M880.9 38.8l1.6 1.3v-1.3z" fill="#dcc36e"/></g>
<text x="885" y="38.9" fill="#e8cf8f" textLength="28.2" lengthAdjust="spacingAndGlyphs">Comment</text>
<rect x="928.6" y="33.5" width="6.6" height="6" rx="0.8" fill="none" stroke="#2f6fc0" stroke-width="1.3"/>
<circle cx="934.6" cy="32.3" r="3.6" fill="#3a3f4d"/>
<text x="933.1" y="34.4" fill="#e8e9ee" style="font-size:5.6px">5</text>

<!-- tool group (left viewer) -->
<g id="tools">
<rect x="246.4" y="33.4" width="7.2" height="6.4" rx="0.9" fill="none" stroke="#cfd2d9" stroke-width="1.1"/><rect x="246.6" y="33.6" width="3.3" height="6" fill="#cfd2d9"/>
<rect x="259.2" y="33.2" width="7.6" height="6.8" rx="1" fill="#b9bcc4"/><path d="M261.7 33.2v6.8M264.3 33.2v6.8M259.2 35.5h7.6M259.2 37.8h7.6" stroke="#1b1e27" stroke-width="0.6"/>
<circle cx="275.3" cy="35.8" r="2.6" fill="none" stroke="#e4e6ea" stroke-width="1.2"/><path d="M277.2 37.8l2.4 2.4" stroke="#e4e6ea" stroke-width="1.3"/>
<path d="M287.3 28.5v16M337.7 28.5v16" stroke="#252832" stroke-width="1"/>
<path d="M295.6 34.7v3.8l-2.5-1.9z" fill="#e4e6ea"/>
<text x="300" y="38.9" fill="#eceef2">1</text>
<text x="308.5" y="38.9" fill="#d5d7de" textLength="12.6" lengthAdjust="spacingAndGlyphs">of 4</text>
<path d="M326.1 34.7v3.8l2.5-1.9z" fill="#e4e6ea"/>
<circle cx="359" cy="36.5" r="3.3" fill="none" stroke="#d9dbe1" stroke-width="1.1"/><path d="M357.2 36.5h3.6" stroke="#d9dbe1" stroke-width="1"/>
<circle cx="372.1" cy="36.5" r="3.3" fill="none" stroke="#d9dbe1" stroke-width="1.1"/><path d="M370.3 36.5h3.6M372.1 34.7v3.6" stroke="#d9dbe1" stroke-width="1"/>
<rect x="382.5" y="31.5" width="22.5" height="10" rx="1.5" fill="#171920"/>
<text x="385" y="38.9" fill="#eceef2" textLength="17.3" lengthAdjust="spacingAndGlyphs">100 %</text>
<path d="M408.5 35.6h3.8l-1.9 2.3z" fill="#e4e6ea"/>
<path d="M426.3 32.6v6.6l1.7-1.5l1.2 2.6l1-0.5l-1.2-2.5h2.2z" fill="#e4e6ea"/>
<path d="M439.6 36.2l1 3q0.3 1 1.3 1h2.6q1 0 1.2-1l0.5-3.6q0-0.6-0.6-0.6t-0.6 0.6v-1.7q0-0.6-0.6-0.6t-0.6 0.6v-0.5q0-0.6-0.6-0.6t-0.6 0.6v0.5q0-0.6-0.6-0.6t-0.6 0.6v3.2l-0.7-1.1q-0.4-0.5-0.8-0.2t-0.1 0.8z" fill="#e4e6ea"/>
<path d="M452.3 35.2a2.9 2.9 0 1 0 2.6-1.6" fill="none" stroke="#d9dbe1" stroke-width="1.1"/><path d="M455.4 32l-1.8 1.7l1.9 1.4z" fill="#d9dbe1"/>
<rect x="463.6" y="33.9" width="8.8" height="5.2" rx="1" fill="#d9dbe1"/><path d="M465.6 36.5h4.8" stroke="#1b1e27" stroke-width="0.9"/>
</g>
<!-- tool group (right viewer, partially covered by popup) -->
<g>
<rect x="488.4" y="33.4" width="7.2" height="6.4" rx="0.9" fill="none" stroke="#cfd2d9" stroke-width="1.1"/><rect x="488.6" y="33.6" width="3.3" height="6" fill="#cfd2d9"/>
<rect x="501.2" y="33.2" width="4.3" height="6.8" rx="1" fill="#b9bcc4"/>
<circle cx="601.3" cy="36.5" r="3.3" fill="none" stroke="#d9dbe1" stroke-width="1.1"/><path d="M599.5 36.5h3.6" stroke="#d9dbe1" stroke-width="1"/>
<circle cx="614.3" cy="36.5" r="3.3" fill="none" stroke="#d9dbe1" stroke-width="1.1"/><path d="M612.5 36.5h3.6M614.3 34.7v3.6" stroke="#d9dbe1" stroke-width="1"/>
<rect x="624.7" y="31.5" width="22.5" height="10" rx="1.5" fill="#171920"/>
<text x="627.2" y="38.9" fill="#eceef2" textLength="17.3" lengthAdjust="spacingAndGlyphs">100 %</text>
<path d="M650.7 35.6h3.8l-1.9 2.3z" fill="#e4e6ea"/>
<path d="M668.5 32.6v6.6l1.7-1.5l1.2 2.6l1-0.5l-1.2-2.5h2.2z" fill="#e4e6ea"/>
<path d="M681.8 36.2l1 3q0.3 1 1.3 1h2.6q1 0 1.2-1l0.5-3.6q0-0.6-0.6-0.6t-0.6 0.6v-1.7q0-0.6-0.6-0.6t-0.6 0.6v-0.5q0-0.6-0.6-0.6t-0.6 0.6v0.5q0-0.6-0.6-0.6t-0.6 0.6v3.2l-0.7-1.1q-0.4-0.5-0.8-0.2t-0.1 0.8z" fill="#e4e6ea"/>
<path d="M694.5 35.2a2.9 2.9 0 1 0 2.6-1.6" fill="none" stroke="#d9dbe1" stroke-width="1.1"/><path d="M697.6 32l-1.8 1.7l1.9 1.4z" fill="#d9dbe1"/>
<rect x="705.8" y="33.9" width="8.8" height="5.2" rx="1" fill="#d9dbe1"/><path d="M707.8 36.5h4.8" stroke="#1b1e27" stroke-width="0.9"/>
</g>
</svg>
</div>
</body></html>
